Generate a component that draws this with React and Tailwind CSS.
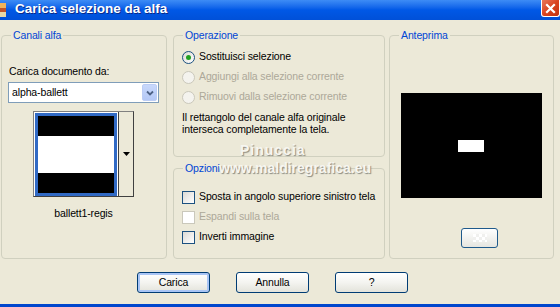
import React from "react";

const font = { fontFamily: '"Liberation Sans", Arial, sans-serif' };

function Radio({ checked, disabled, label }) {
  return (
    <div className={`flex items-center h-[20px] whitespace-nowrap ${disabled ? "text-[#aca899]" : "text-black"}`}>
      <span
        className={`w-[13px] h-[13px] rounded-full border flex items-center justify-center mr-[4px] shrink-0 ${
          disabled ? "border-[#cac8bb] bg-[#f4f3ee]" : "border-[#1c5180] bg-gradient-to-br from-[#dcdad5] to-white"
        }`}
      >
        {checked && <span className="w-[5px] h-[5px] rounded-full bg-[#21a121]" />}
      </span>
      <span>{label}</span>
    </div>
  );
}

function Check({ disabled, label }) {
  return (
    <div className={`flex items-center h-[20px] whitespace-nowrap ${disabled ? "text-[#aca899]" : "text-black"}`}>
      <span
        className={`w-[13px] h-[13px] border mr-[4px] shrink-0 ${
          disabled ? "border-[#cac8bb] bg-white" : "border-[#1c5180] bg-gradient-to-br from-[#dcdad5] to-white"
        }`}
      />
      <span>{label}</span>
    </div>
  );
}

function Group({ title, className, children }) {
  return (
    <fieldset className={`border border-[#d0d0bf] rounded-[4px] px-[6px] ${className}`}>
      <legend className="ml-[3px] px-[2px] text-[#0046d5] leading-[13px]">{title}</legend>
      {children}
    </fieldset>
  );
}

function XpButton({ children, def }) {
  return (
    <div
      className={`w-[73px] h-[21px] rounded-[3px] border border-[#003c74] bg-gradient-to-b from-white via-[#f4f4f0] to-[#e3e3db] flex items-center justify-center text-black ${
        def ? "shadow-[inset_0_0_0_2px_#a9c5f5]" : ""
      }`}
    >
      {children}
    </div>
  );
}

export default function App() {
  return (
    <div
      className="relative w-[560px] h-[307px] overflow-hidden bg-[#0047cd] text-[10.5px] tracking-[-0.12px]"
      style={font}
    >
      {/* title bar */}
      <div className="h-[20px] bg-gradient-to-b from-[#3d8cf5] via-[#0058e6] to-[#0050d8] flex items-center relative">
        <div className="w-[6px] h-[14px] flex flex-col">
          <div className="h-[5px] bg-[#f0b35a]" />
          <div className="h-[4px] bg-[#c0542a]" />
          <div className="h-[5px] bg-[#e8d9a8]" />
        </div>
        <span className="ml-[9px] text-white font-bold text-[13.5px] tracking-normal -mt-[2px] [text-shadow:1px_1px_0_#0a2a8a]">
          Carica selezione da alfa
        </span>
        <div className="absolute right-[0px] top-0 w-[19px] h-[17px] rounded-b-[3px] border border-white border-t-0 bg-gradient-to-br from-[#e9775c] via-[#d9421d] to-[#c33514] flex items-center justify-center">
          <svg width="11" height="11" viewBox="0 0 11 11">
            <path d="M2 2 L9 9 M9 2 L2 9" stroke="white" strokeWidth="2.2" strokeLinecap="square" />
          </svg>
        </div>
      </div>

      {/* body */}
      <div className="h-[284px] bg-[#ece9d8] pl-[1px] pt-[9px] flex flex-col">
        <div className="flex">
          {/* Canali alfa */}
          <Group title="Canali alfa" className="w-[166px] h-[230px]">
            <div className="pl-[1px] pt-[23px] leading-[13px]">Carica documento da:</div>
            <div className="mt-[4px] w-[151px] h-[21px] border border-[#7f9db9] bg-white flex items-center">
              <span className="pl-[3px] flex-1">alpha-ballett</span>
              <span className="w-[15px] h-[17px] mr-[1px] rounded-[2px] bg-gradient-to-b from-[#c8d8fb] to-[#b4c8f6] border border-[#bccdf5] flex items-center justify-center">
                <svg width="8" height="6" viewBox="0 0 8 6">
                  <path d="M1 1.5 L4 4.5 L7 1.5" stroke="#4d6185" strokeWidth="1.8" fill="none" />
                </svg>
              </span>
            </div>
            <div className="mt-[8px] ml-[25px] w-[101px] h-[86px] border border-t-[#808080] border-l-[#808080] border-r-[#404040] border-b-[#404040] bg-white flex">
              <div className="ml-[1px] mt-[1px] w-[82px] h-[83px] border-[3px] border-[#316ac5] flex flex-col">
                <div className="h-[20px] bg-black" />
                <div className="flex-1 bg-white" />
                <div className="h-[20px] bg-black" />
              </div>
              <div className="flex-1 ml-[1px] bg-[#ece9d8] border-l border-[#404040] flex items-center justify-center">
                <svg width="7" height="4" viewBox="0 0 7 4">
                  <path d="M0 0 H7 L3.5 4 Z" fill="black" />
                </svg>
              </div>
            </div>
            <div className="mt-[10px] text-center pr-[1px] leading-[13px]">ballett1-regis</div>
          </Group>

          {/* middle column */}
          <div className="ml-[6px] w-[212px] flex flex-col">
            <Group title="Operazione" className="h-[128px]">
              <div className="pl-[2px] pt-[5px]">
                <Radio checked label="Sostituisci selezione" />
                <Radio disabled label="Aggiungi alla selezione corrente" />
                <Radio disabled label="Rimuovi dalla selezione corrente" />
                <div className="mt-[4px] leading-[12px] whitespace-nowrap">
                  Il rettangolo del canale alfa originale
                  <br />
                  interseca completamente la tela.
                </div>
              </div>
            </Group>
            <Group title="Opzioni" className="mt-[5px] h-[97px]">
              <div className="pl-[2px] pt-[12px]">
                <Check label="Sposta in angolo superiore sinistro tela" />
                <Check disabled label="Espandi sulla tela" />
                <Check label="Inverti immagine" />
              </div>
            </Group>
          </div>

          {/* Anteprima */}
          <Group title="Anteprima" className="ml-[4px] w-[165px] h-[230px]">
            <div className="flex flex-col items-center">
              <div className="mt-[51px] w-[141px] h-[105px] bg-black flex items-center justify-center">
                <div className="w-[26px] h-[12px] bg-white ml-[-1px]" />
              </div>
              <div className="mt-[30px] ml-[16px] w-[37px] h-[20px] rounded-[3px] border border-[#1f5a8c] bg-gradient-to-b from-white to-[#e6e6e0] flex items-center justify-center">
                <div className="w-[14px] h-[8px] bg-[repeating-conic-gradient(#f0f0ee_0_25%,#ffffff_0_50%)] bg-[length:6px_6px]" />
              </div>
            </div>
          </Group>
        </div>

        {/* buttons */}
        <div className="mt-[13px] flex pl-[136px] gap-[26px]">
          <XpButton def>Carica</XpButton>
          <XpButton>Annulla</XpButton>
          <XpButton>?</XpButton>
        </div>
      </div>

      {/* watermark */}
      <div className="absolute left-[240px] top-[143px] text-[14px] leading-[14px] text-[#f7f6f0] font-bold tracking-[1px] [text-shadow:1px_1px_1px_#8a8a80] pointer-events-none">
        Pinuccia
      </div>
      <div className="absolute left-[219px] top-[161px] text-[14px] leading-[14px] text-[#f7f6f0] font-bold tracking-normal [text-shadow:1px_1px_1px_#8a8a80] pointer-events-none">
        www.maldiregrafica.eu
      </div>
    </div>
  );
}
